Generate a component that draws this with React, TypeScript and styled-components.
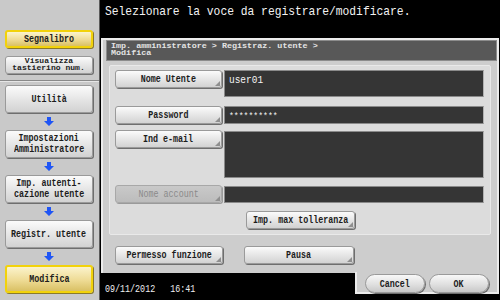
import React from "react";
import styled, { createGlobalStyle, css } from "styled-components";

const GlobalStyle = createGlobalStyle`
  html, body {
    margin: 0;
    padding: 0;
    background: #000;
  }
  * {
    box-sizing: border-box;
  }
`;

const Screen = styled.div`
  width: 500px;
  height: 300px;
  display: flex;
  overflow: hidden;
  font-family: "Liberation Mono", "DejaVu Sans Mono", monospace;
  background: #000;
`;

// the panel font is a narrow, tall bitmap face: squeeze a mono font to match
const Txt = styled.span<{ $size?: number; $sx?: number; $left?: boolean; $bold?: boolean }>`
  display: inline-block;
  font-size: ${(p) => p.$size ?? 11}px;
  font-weight: ${(p) => (p.$bold === false ? "normal" : "bold")};
  transform: scaleX(${(p) => p.$sx ?? 0.76});
  transform-origin: ${(p) => (p.$left ? "left center" : "center")};
  white-space: pre;
`;

const Sidebar = styled.aside`
  width: 100px;
  height: 300px;
  background: #c9c9c9;
  border-right: 1px solid #5a5a5a;
  display: flex;
  flex-direction: column;
`;

const SideTop = styled.div`
  height: 81px;
  padding: 30px 6px 0 5px;
  display: flex;
  flex-direction: column;
  gap: 8px;
  border-bottom: 1px solid #8a8a8a;
  box-shadow: 0 1px 0 #e6e6e6;
`;

const SideSteps = styled.div`
  padding: 4px 6px 0 5px;
  display: flex;
  flex-direction: column;
`;

const buttonFace = css`
  background: linear-gradient(#fbfbfb, #e4e4e4 55%, #d2d2d2);
  border: 1px solid #9a9a9a;
  border-radius: 3px;
  box-shadow: 1px 1px 0 #6e6e6e;
  color: #1c1c1c;
`;

const yellowFace = css`
  background: linear-gradient(#fbf3cc, #eedb95 55%, #d9c064);
  border: 2px solid #f2d20a;
  border-radius: 3px;
  box-shadow: 1px 1px 0 #8a7a2a;
  color: #1c1c1c;
`;

const SideButton = styled.div<{ $yellow?: boolean; $h: number }>`
  ${(p) => (p.$yellow ? yellowFace : buttonFace)}
  height: ${(p) => p.$h}px;
  display: flex;
  flex-direction: column;
  align-items: center;
  justify-content: center;
  text-align: center;
  line-height: 11px;
`;

const SmallLines = styled.div`
  line-height: 7px;
  display: flex;
  flex-direction: column;
  align-items: center;
`;

const ArrowSlot = styled.div`
  height: 17px;
  display: flex;
  align-items: center;
  justify-content: center;
`;

const Main = styled.main`
  width: 400px;
  display: flex;
  flex-direction: column;
`;

const Title = styled.div`
  height: 38px;
  padding: 2px 0 0 5px;
  color: #f2f2f2;
`;

const Panel = styled.section`
  margin-left: 1px;
  width: 398px;
  height: 235px;
  background: #cdcdcd;
  border: 2px solid #ececec;
  border-bottom: none;
  padding: 0 0 0 3px;
  display: flex;
  flex-direction: column;
`;

const Crumb = styled.div`
  height: 21px;
  background: #585858;
  border: 1px solid #8c8c8c;
  color: #e4e4e4;
  line-height: 7px;
  padding: 2px 0 0 4px;
  display: flex;
  flex-direction: column;
`;

const InnerBox = styled.div`
  margin: 4px 6px 0 3px;
  height: 170px;
  background: #dcdcdc;
  border: 1px solid #e9e9e9;
  border-radius: 2px;
  padding: 4px 4px 0 5px;
  display: flex;
  flex-direction: column;
`;

const FieldRow = styled.div<{ $mt?: number }>`
  display: flex;
  gap: 2px;
  margin-top: ${(p) => p.$mt ?? 0}px;
`;

const Btn = styled.div<{ $w: number; $disabled?: boolean }>`
  ${buttonFace}
  position: relative;
  width: ${(p) => p.$w}px;
  height: 18px;
  flex: none;
  display: flex;
  align-items: center;
  justify-content: center;
  ${(p) =>
    p.$disabled &&
    css`
      background: linear-gradient(#c9c9c9, #bcbcbc);
      border-color: #a8a8a8;
      box-shadow: 1px 1px 0 #9a9a9a;
      color: #8a8a8a;
    `}
  &::after {
    content: "";
    position: absolute;
    right: 1px;
    bottom: 1px;
    width: 0;
    height: 0;
    border-left: 5px solid transparent;
    border-bottom: 5px solid #8f8f8f;
  }
`;

const Field = styled.div<{ $h: number; $mt?: number }>`
  width: 260px;
  height: ${(p) => p.$h}px;
  margin-top: ${(p) => p.$mt ?? 0}px;
  background: #353535;
  border: 1px solid #8a8a8a;
  border-right-color: #b0b0b0;
  color: #f4f4f4;
  padding: 1px 0 0 4px;
  line-height: 14px;
`;

const CenterRow = styled.div`
  display: flex;
  padding-left: 131px;
  margin-top: 8px;
`;

const BottomRow = styled.div`
  display: flex;
  gap: 21px;
  margin: 11px 0 0 9px;
`;

const Footer = styled.div`
  height: 27px;
  display: flex;
`;

const Status = styled.div`
  flex: 1;
  color: #f0f0f0;
  padding: 6px 0 0 5px;
`;

const ActionTab = styled.div`
  width: 144px;
  height: 22px;
  margin-right: 1px;
  margin-top: -1px;
  background: #cdcdcd;
  border: 2px solid #ececec;
  border-top: none;
  display: flex;
  gap: 4px;
  padding: 2px 0 0 8px;
`;

const Pill = styled.div`
  width: 60px;
  height: 19px;
  border-radius: 10px;
  background: linear-gradient(#f8f8f8, #e0e0e0 55%, #c8c8c8);
  border: 1px solid #9a9a9a;
  box-shadow: 1px 1px 0 #6e6e6e;
  display: flex;
  align-items: center;
  justify-content: center;
  color: #1c1c1c;
`;

const DownArrow = () => (
  <svg width="10" height="9" viewBox="0 0 10 9">
    <path d="M3 0h4v4h3l-5 5-5-5h3z" fill="#1f55f5" />
  </svg>
);

const steps = [
  ["Utilità"],
  ["Impostazioni", "Amministratore"],
  ["Imp. autenti-", "cazione utente"],
  ["Registr. utente"],
];

export default function App() {
  return (
    <>
      <GlobalStyle />
      <Screen>
        <Sidebar>
          <SideTop>
            <SideButton $yellow $h={18}>
              <Txt>Segnalibro</Txt>
            </SideButton>
            <SideButton $h={18}>
              <SmallLines>
                <Txt $size={7} $sx={1.15}>Visualizza</Txt>
                <Txt $size={7} $sx={1.15}>tastierino num.</Txt>
              </SmallLines>
            </SideButton>
          </SideTop>
          <SideSteps>
            {steps.map((lines) => (
              <React.Fragment key={lines[0]}>
                <SideButton $h={28}>
                  {lines.map((l) => (
                    <Txt key={l}>{l}</Txt>
                  ))}
                </SideButton>
                <ArrowSlot>
                  <DownArrow />
                </ArrowSlot>
              </React.Fragment>
            ))}
            <SideButton $yellow $h={28}>
              <Txt>Modifica</Txt>
            </SideButton>
          </SideSteps>
        </Sidebar>

        <Main>
          <Title>
            <Txt $size={13} $sx={0.87} $left $bold={false}>
              Selezionare la voce da registrare/modificare.
            </Txt>
          </Title>
          <Panel>
            <Crumb>
              <Txt $size={7} $sx={1.2} $left>
                {"Imp. amministratore > Registraz. utente >"}
              </Txt>
              <Txt $size={7} $sx={1.2} $left>
                Modifica
              </Txt>
            </Crumb>
            <InnerBox>
              <FieldRow>
                <Btn $w={107}>
                  <Txt>Nome Utente</Txt>
                </Btn>
                <Field $h={27}>
                  <Txt $size={11} $sx={0.86} $left $bold={false}>
                    user01
                  </Txt>
                </Field>
              </FieldRow>
              <FieldRow $mt={9}>
                <Btn $w={107}>
                  <Txt>Password</Txt>
                </Btn>
                <Field $h={18}>
                  <Txt $size={9} $sx={0.9} $left $bold={false}>
                    **********
                  </Txt>
                </Field>
              </FieldRow>
              <FieldRow $mt={6}>
                <Btn $w={107}>
                  <Txt>Ind e-mail</Txt>
                </Btn>
                <Field $h={47} $mt={1} />
              </FieldRow>
              <FieldRow $mt={7}>
                <Btn $w={107} $disabled>
                  <Txt $bold={false}>Nome account</Txt>
                </Btn>
                <Field $h={17} $mt={1} />
              </FieldRow>
              <CenterRow>
                <Btn $w={109}>
                  <Txt>Imp. max tolleranza</Txt>
                </Btn>
              </CenterRow>
            </InnerBox>
            <BottomRow>
              <Btn $w={108}>
                <Txt>Permesso funzione</Txt>
              </Btn>
              <Btn $w={110}>
                <Txt>Pausa</Txt>
              </Btn>
            </BottomRow>
          </Panel>
          <Footer>
            <Status>
              <Txt $size={11} $sx={0.76} $left $bold={false}>
                {"09/11/2012   16:41"}
              </Txt>
            </Status>
            <ActionTab>
              <Pill>
                <Txt>Cancel</Txt>
              </Pill>
              <Pill>
                <Txt>OK</Txt>
              </Pill>
            </ActionTab>
          </Footer>
        </Main>
      </Screen>
    </>
  );
}
